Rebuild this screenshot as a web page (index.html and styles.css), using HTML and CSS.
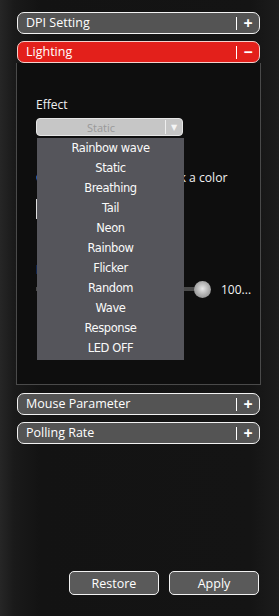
FILE: index.html
```html
<!DOCTYPE html>
<html lang="en">
<head>
    <meta charset="UTF-8">
    <meta name="viewport" content="width=device-width, initial-scale=1.0">
    <title>Mouse Settings</title>
    <link rel="stylesheet" href="styles.css">
</head>
<body>
    <div class="app">
        <div class="section-head">
            <span class="title">DPI Setting</span>
            <span class="toggle">+</span>
        </div>

        <div class="section-head active">
            <span class="title">Lighting</span>
            <span class="toggle">&minus;</span>
        </div>
        <div class="panel">
            <div class="label">Effect</div>
            <div class="select-wrap">
                <div class="select">
                    <span class="select-value">Static</span>
                    <span class="select-arrow">&#9660;</span>
                </div>
                <ul class="dropdown">
                    <li>Rainbow wave</li>
                    <li>Static</li>
                    <li>Breathing</li>
                    <li>Tail</li>
                    <li>Neon</li>
                    <li>Rainbow</li>
                    <li>Flicker</li>
                    <li>Random</li>
                    <li>Wave</li>
                    <li>Response</li>
                    <li>LED OFF</li>
                </ul>
            </div>
            <div class="label color-label">Color: Click the box to pick a color</div>
            <div class="color-box"></div>
            <div class="label bright-label">Brightness</div>
            <div class="slider">
                <div class="track"></div>
                <div class="knob"></div>
                <span class="slider-value">100...</span>
            </div>
        </div>

        <div class="section-head">
            <span class="title">Mouse Parameter</span>
            <span class="toggle">+</span>
        </div>

        <div class="section-head">
            <span class="title">Polling Rate</span>
            <span class="toggle">+</span>
        </div>

        <div class="actions">
            <button class="btn">Restore</button>
            <button class="btn">Apply</button>
        </div>
    </div>
</body>
</html>
```

FILE: styles.css
```css
body {
    margin: 0;
    background: linear-gradient(90deg, #262626 0px, #1a1a1a 14px, #131313 40px, #141414 250px, #1c1c1c 279px);
    font-family: 'Open Sans', 'DejaVu Sans', sans-serif;
    color: #fff;
    width: 279px;
    height: 616px;
    overflow: hidden;
}

.app {
    display: flex;
    flex-direction: column;
    padding: 12px 19px 0 17px;
    height: 604px;
}

.section-head {
    display: flex;
    align-items: center;
    height: 20px;
    border: 1.5px solid #f2f2f2;
    border-radius: 7px;
    background: #545454;
    padding: 0 0 0 8px;
    margin-bottom: 7px;
}

.section-head.active {
    background: #e3201b;
    border-color: #f4d0cc;
    margin-bottom: 0;
}

.title {
    flex: 1;
    font-size: 12.5px;
    line-height: 20px;
}

.toggle {
    width: 22px;
    height: 13px;
    border-left: 1px solid #fff;
    text-align: center;
    font-size: 16px;
    font-weight: bold;
    line-height: 12px;
}

.panel {
    margin: 0 -1px 8px -1px;
    border: 1px solid #4a4a4a;
    border-top: none;
    background: #0e0e0e;
    padding: 35px 4px 0 19px;
    box-sizing: border-box;
    height: 322px;
}

.label {
    font-size: 12px;
    line-height: 14px;
    color: #f0f0f0;
    white-space: nowrap;
}

.select-wrap {
    position: relative;
    width: 147px;
    margin-top: 6px;
}

.select {
    display: flex;
    align-items: center;
    height: 18px;
    box-sizing: border-box;
    border: 1px solid #e6e6e6;
    border-radius: 4px;
    background: #c6c6c6;
}

.select-value {
    flex: 1;
    text-align: center;
    font-size: 11px;
    color: #999;
}

.select-arrow {
    width: 16px;
    height: 14px;
    border-left: 1px solid #eee;
    font-size: 8px;
    line-height: 14px;
    text-align: center;
    color: #f4f4f4;
}

.dropdown {
    position: absolute;
    top: 20px;
    left: 1px;
    width: 147px;
    margin: 0;
    padding: 0 0 2px 0;
    list-style: none;
    background: #55555b;
    z-index: 2;
}

.dropdown li {
    height: 20px;
    line-height: 21px;
    text-align: center;
    font-family: 'DejaVu Sans', sans-serif;
    font-size: 11.5px;
    letter-spacing: -0.4px;
    color: #fafafa;
}

.color-label {
    margin-top: 35px;
    font-size: 12.2px;
}

.color-box {
    width: 40px;
    height: 18px;
    border: 1px solid #ddd;
    margin-top: 14px;
}

.bright-label {
    margin-top: 44px;
}

.slider {
    display: flex;
    align-items: center;
    margin-top: 4px;
    height: 16px;
}

.track {
    flex-shrink: 0;
    width: 162px;
    height: 4px;
    background: #4a4a4a;
}

.knob {
    flex-shrink: 0;
    width: 17px;
    height: 17px;
    border-radius: 50%;
    margin-left: -4px;
    background: radial-gradient(circle at 50% 45%, #e8e8e8 0%, #b4b4b4 45%, #7a7a7a 100%);
}

.slider-value {
    margin-left: 10px;
    font-size: 12px;
    color: #f4f4f4;
    white-space: nowrap;
}

.actions {
    display: flex;
    justify-content: flex-end;
    gap: 10px;
    margin-top: auto;
    margin-bottom: 21px;
    margin-right: 1px;
}

.btn {
    width: 90px;
    height: 24px;
    border: 1.5px solid #f2f2f2;
    border-radius: 5px;
    background: #5a5a5a;
    color: #fff;
    font-family: 'Open Sans', 'DejaVu Sans', sans-serif;
    font-size: 12.5px;
    padding: 0;
}
```
